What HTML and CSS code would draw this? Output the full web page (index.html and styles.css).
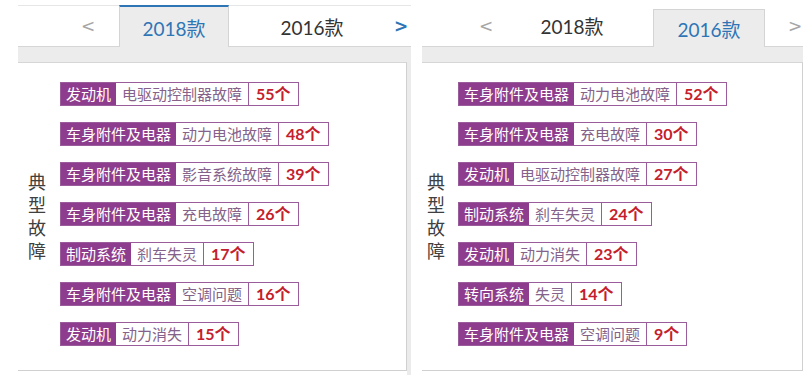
FILE: index.html
```html
<!DOCTYPE html>
<html lang="zh-CN">
<head>
<meta charset="utf-8">
<title>典型故障</title>
<link rel="stylesheet" href="styles.css">
</head>
<body>
<div class="page">
  <section class="pane pane--left">
    <div class="tabs tabs--lined">
      <span class="arrow arrow--prev">&lt;</span>
      <span class="tab tab--active tab--blue-top">2018款</span>
      <span class="tab tab--wide">2016款</span>
      <span class="arrow arrow--next arrow--blue">&gt;</span>
    </div>
    <div class="strip"></div>
    <div class="panel-wrap">
      <div class="panel">
        <div class="vlabel">典型故障</div>
        <ul class="faults">
          <li class="fault"><span class="f-cat">发动机</span><span class="f-name">电驱动控制器故障</span><span class="f-count">55个</span></li>
          <li class="fault"><span class="f-cat">车身附件及电器</span><span class="f-name">动力电池故障</span><span class="f-count">48个</span></li>
          <li class="fault"><span class="f-cat">车身附件及电器</span><span class="f-name">影音系统故障</span><span class="f-count">39个</span></li>
          <li class="fault"><span class="f-cat">车身附件及电器</span><span class="f-name">充电故障</span><span class="f-count">26个</span></li>
          <li class="fault"><span class="f-cat">制动系统</span><span class="f-name">刹车失灵</span><span class="f-count">17个</span></li>
          <li class="fault"><span class="f-cat">车身附件及电器</span><span class="f-name">空调问题</span><span class="f-count">16个</span></li>
          <li class="fault"><span class="f-cat">发动机</span><span class="f-name">动力消失</span><span class="f-count">15个</span></li>
        </ul>
      </div>
    </div>
  </section>

  <section class="pane pane--right">
    <div class="tabs">
      <span class="arrow arrow--prev">&lt;</span>
      <span class="tab tab--narrow">2018款</span>
      <span class="tab tab--active tab--grey-top">2016款</span>
      <span class="arrow arrow--next">&gt;</span>
    </div>
    <div class="strip"></div>
    <div class="panel">
      <div class="vlabel">典型故障</div>
      <ul class="faults">
        <li class="fault"><span class="f-cat">车身附件及电器</span><span class="f-name">动力电池故障</span><span class="f-count">52个</span></li>
        <li class="fault"><span class="f-cat">车身附件及电器</span><span class="f-name">充电故障</span><span class="f-count">30个</span></li>
        <li class="fault"><span class="f-cat">发动机</span><span class="f-name">电驱动控制器故障</span><span class="f-count">27个</span></li>
        <li class="fault"><span class="f-cat">制动系统</span><span class="f-name">刹车失灵</span><span class="f-count">24个</span></li>
        <li class="fault"><span class="f-cat">发动机</span><span class="f-name">动力消失</span><span class="f-count">23个</span></li>
        <li class="fault"><span class="f-cat">转向系统</span><span class="f-name">失灵</span><span class="f-count">14个</span></li>
        <li class="fault"><span class="f-cat">车身附件及电器</span><span class="f-name">空调问题</span><span class="f-count">9个</span></li>
      </ul>
    </div>
  </section>
</div>
</body>
</html>
```
FILE: styles.css
```css
* { box-sizing: border-box; }

html, body {
  margin: 0;
  padding: 0;
  background: #ffffff;
}

body {
  font-family: Lato, "Noto Sans CJK SC", sans-serif;
  color: #333333;
}

.page {
  display: flex;
  align-items: flex-start;
  padding-top: 5px;
  height: 375px;
  overflow: hidden;
}

.pane {
  display: flex;
  flex-direction: column;
}

.pane--left {
  margin-left: 18px;
  width: 393px;
}

.pane--right {
  margin-left: 11px;
  width: 381px;
}

/* ---------- tabs ---------- */
.tabs {
  display: flex;
  align-items: stretch;
  height: 42px;
  border-bottom: 1px solid #d6d6d6;
}

.tabs--lined {
  border-top: 1px solid #e6e6e6;
}

.tab {
  display: flex;
  align-items: center;
  justify-content: center;
  font-size: 19px;
  color: #333333;
  font-family: Lato, "Noto Sans CJK SC", sans-serif;
}

.tab--active {
  background: #ececec;
  color: #2e75b6;
  border-left: 1px solid #d4d4d4;
  border-right: 1px solid #d4d4d4;
  margin-bottom: -1px;
}

.tab--blue-top {
  border-top: 2px solid #2e75b6;
  margin-top: -1px;
  margin-left: 21px;
  width: 110px;
}

.tab--grey-top {
  border-top: 1px solid #d4d4d4;
  margin-top: 4px;
  margin-left: 15px;
  width: 112px;
}

.tab--wide {
  width: 166px;
}

.tab--narrow {
  margin-left: 10px;
  width: 132px;
}

.arrow {
  display: flex;
  align-items: center;
  justify-content: center;
  font-family: "DejaVu Sans", sans-serif;
  font-size: 17px;
  color: #a6a6a6;
}

.pane--left .arrow--prev {
  margin-left: 60px;
  width: 20px;
}

.pane--right .arrow--prev {
  margin-left: 54px;
  width: 20px;
}

.pane--left .arrow--next {
  width: 12px;
}

.pane--right .arrow--next {
  margin-left: 24px;
  width: 12px;
}

.arrow--blue {
  color: #2e75b6;
  font-weight: bold;
}

/* ---------- strip & panel ---------- */
.strip {
  height: 15px;
  background: #ececec;
}

.panel-wrap {
  border-right: 4px solid #ebebeb;
  height: 313px;
}

.panel {
  display: flex;
  align-items: center;
  height: 309px;
  border-top: 1px solid #d6d6d6;
  border-right: 1px solid #d0d0d0;
  border-bottom: 1px solid #d0d0d0;
  background: #ffffff;
}

.pane--left .panel { padding-left: 10px; }
.pane--right .panel { padding-left: 5px; }

.vlabel {
  writing-mode: vertical-rl;
  text-orientation: upright;
  width: 18px;
  font-family: "Noto Sans CJK SC", sans-serif;
  font-size: 18px;
  line-height: 18px;
  letter-spacing: 5px;
  color: #404040;
  margin-top: 5px;
}

.pane--left .vlabel { margin-right: 14px; }
.pane--right .vlabel { margin-right: 13px; }

/* ---------- fault rows ---------- */
.faults {
  list-style: none;
  margin: 0;
  padding: 0;
  display: flex;
  flex-direction: column;
  align-items: flex-start;
  gap: 16px;
  align-self: flex-start;
  padding-top: 19px;
}

.fault {
  display: flex;
  border: 1px solid #9b5c9b;
  height: 24px;
  font-family: "Noto Sans CJK SC", sans-serif;
  font-size: 15px;
  line-height: 22px;
}

.f-cat {
  background: #8e3c8d;
  color: #ffffff;
  padding: 0 5px;
}

.f-name {
  color: #85628a;
  padding: 0 6px;
  border-right: 1px solid #9b5c9b;
}

.f-count {
  color: #c4202c;
  font-family: Lato, "Noto Sans CJK SC", sans-serif;
  font-weight: bold;
  font-size: 16px;
  padding: 0 7px;
}
```
